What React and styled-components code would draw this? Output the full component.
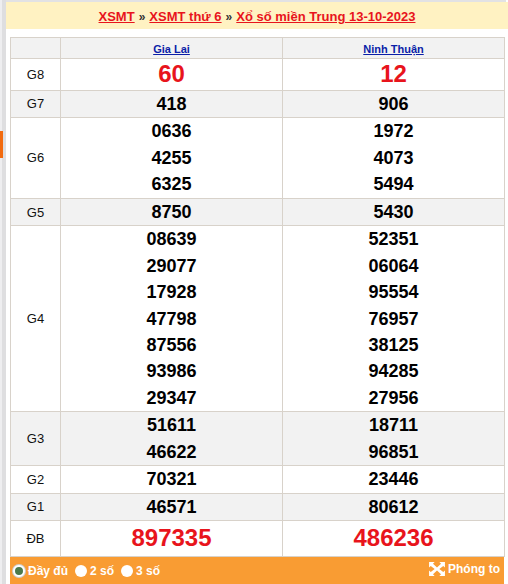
import React from 'react';
import styled, { createGlobalStyle } from 'styled-components';

const GlobalStyle = createGlobalStyle`
  html, body {
    margin: 0;
    padding: 0;
    background: #fff;
    font-family: 'Liberation Sans', Arial, sans-serif;
  }
`;

const rows = [
  { label: 'G8', a: ['60'], b: ['12'], big: true, height: 32 },
  { label: 'G7', a: ['418'], b: ['906'], shade: true, height: 27 },
  { label: 'G6', a: ['0636', '4255', '6325'], b: ['1972', '4073', '5494'], height: 81 },
  { label: 'G5', a: ['8750'], b: ['5430'], shade: true, height: 27 },
  {
    label: 'G4',
    a: ['08639', '29077', '17928', '47798', '87556', '93986', '29347'],
    b: ['52351', '06064', '95554', '76957', '38125', '94285', '27956'],
    height: 186,
  },
  { label: 'G3', a: ['51611', '46622'], b: ['18711', '96851'], shade: true, height: 52 },
  { label: 'G2', a: ['70321'], b: ['23446'], height: 27 },
  { label: 'G1', a: ['46571'], b: ['80612'], shade: true, height: 27 },
  { label: 'ĐB', a: ['897335'], b: ['486236'], big: true, height: 36 },
];

const App = () => (
  <>
    <GlobalStyle />
    <Page>
      <Rail>
        <RailMark />
      </Rail>
      <Main>
        <TopEdge />
        <TitleBar>
          <TitleLink>XSMT</TitleLink>
          <Sep>»</Sep>
          <TitleLink>XSMT thứ 6</TitleLink>
          <Sep>»</Sep>
          <TitleLink>Xổ số miền Trung 13-10-2023</TitleLink>
        </TitleBar>
        <Content>
          <Table>
            <colgroup>
              <col style={{ width: 50 }} />
              <col style={{ width: 222 }} />
              <col style={{ width: 222 }} />
            </colgroup>
            <thead>
              <HeadRow>
                <HeadCell />
                <HeadCell><ProvinceLink>Gia Lai</ProvinceLink></HeadCell>
                <HeadCell><ProvinceLink>Ninh Thuận</ProvinceLink></HeadCell>
              </HeadRow>
            </thead>
            <tbody>
              {rows.map(r => (
                <Row key={r.label} $shade={r.shade} style={{ height: r.height }}>
                  <LabelCell>{r.label}</LabelCell>
                  <NumCell>
                    {r.a.map(n => <Num key={n} $big={r.big}>{n}</Num>)}
                  </NumCell>
                  <NumCell>
                    {r.b.map(n => <Num key={n} $big={r.big}>{n}</Num>)}
                  </NumCell>
                </Row>
              ))}
            </tbody>
          </Table>
          <Footer>
            <Options>
              <Option><Radio $checked />Đầy đủ</Option>
              <Option><Radio />2 số</Option>
              <Option><Radio />3 số</Option>
            </Options>
            <Zoom>
              <svg width="16" height="14" viewBox="0 0 17 15">
                <g fill="#fff">
                  <path d="M0 0h6L4.2 1.8 8.5 6 12.8 1.8 11 0h6v6l-1.8-1.8L11 7.5l4.2 3.3L17 9v6h-6l1.8-1.8L8.5 9 4.2 13.2 6 15H0V9l1.8 1.8L6 7.5 1.8 4.2 0 6z" />
                </g>
              </svg>
              Phóng to
            </Zoom>
          </Footer>
        </Content>
      </Main>
    </Page>
  </>
);

const Page = styled.div`
  display: flex;
  width: 508px;
  height: 584px;
  overflow: hidden;
`;

const Rail = styled.div`
  position: relative;
  width: 4px;
  flex: 0 0 4px;
  background: #dedee0;
  border-left: 2px solid #eeeef0;
`;

const RailMark = styled.div`
  position: absolute;
  left: -2px;
  top: 131px;
  width: 3px;
  height: 27px;
  background: #f26b0f;
`;

const Main = styled.div`
  flex: 1;
  display: flex;
  flex-direction: column;
`;

const TopEdge = styled.div`
  height: 3px;
  margin-right: 2px;
  background: #e2e2e4;
`;

const TitleBar = styled.div`
  height: 31px;
  background: #fff2c2;
  display: flex;
  align-items: center;
  justify-content: center;
  gap: 4px;
  font-size: 13px;
  font-weight: bold;
  padding: 2px 0 0 0;
  box-sizing: border-box;
`;

const TitleLink = styled.a`
  color: #e8141c;
  text-decoration: underline;
  cursor: pointer;
`;

const Sep = styled.span`
  color: #333;
  font-size: 12px;
`;

const Content = styled.div`
  padding: 8px 0 0 4px;
`;

const Table = styled.table`
  width: 494px;
  table-layout: fixed;
  border-collapse: collapse;
  border: 1px solid #d8d2ca;
`;

const HeadRow = styled.tr`
  height: 21px;
  background: #f2f2f2;
`;

const HeadCell = styled.th`
  border: 1px solid #d8d2ca;
  padding: 0;
  text-align: center;
  font-weight: normal;
`;

const ProvinceLink = styled.a`
  font-size: 11px;
  font-weight: bold;
  color: #0b1fa8;
  text-decoration: underline;
  cursor: pointer;
`;

const Row = styled.tr`
  background: ${p => (p.$shade ? '#f2f2f2' : '#fff')};
`;

const LabelCell = styled.td`
  border: 1px solid #d8d2ca;
  padding: 0;
  text-align: center;
  font-size: 13px;
  color: #111;
`;

const NumCell = styled.td`
  border: 1px solid #d8d2ca;
  padding: 0;
  text-align: center;
  vertical-align: middle;
`;

const Num = styled.div`
  font-weight: bold;
  font-size: ${p => (p.$big ? '24px' : '18px')};
  line-height: 26.4px;
  color: ${p => (p.$big ? '#e8141c' : '#000')};
`;

const Footer = styled.div`
  width: 494px;
  height: 27px;
  background: #f99c33;
  display: flex;
  align-items: center;
  justify-content: space-between;
  padding: 0 4px 0 3px;
  box-sizing: border-box;
  color: #fff;
  font-weight: bold;
  font-size: 12px;
`;

const Options = styled.div`
  display: flex;
  align-items: center;
  gap: 7px;
`;

const Option = styled.label`
  display: flex;
  align-items: center;
  gap: 3px;
  cursor: pointer;
`;

const Radio = styled.span`
  box-sizing: border-box;
  width: 12px;
  height: 12px;
  border-radius: 50%;
  background: ${p => (p.$checked ? '#4b7a4b' : '#fff')};
  border: ${p => (p.$checked ? '2px solid #fff' : 'none')};
  box-shadow: ${p => (p.$checked ? '0 0 0 1px #cfcfcf' : 'none')};
`;

const Zoom = styled.div`
  display: flex;
  align-items: center;
  gap: 3px;
  margin-top: -3px;
`;

export default App;
